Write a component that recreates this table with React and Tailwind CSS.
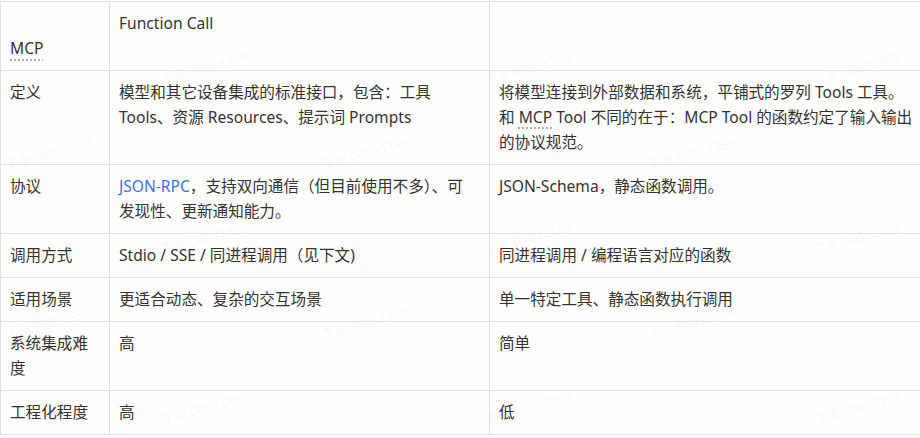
import React from 'react';

const rows = [
  {
    h: ['', 'MCP'],
    a: ['Function Call'],
    b: [''],
    header: true,
  },
  {
    h: ['定义'],
    a: ['模型和其它设备集成的标准接口，包含：工具', 'Tools、资源 Resources、提示词 Prompts'],
    b: [
      '将模型连接到外部数据和系统，平铺式的罗列 Tools 工具。',
      <>和 <span className="underline decoration-dotted decoration-[#9a9a9a] underline-offset-[5px]">MCP</span> Tool 不同的在于：MCP Tool 的函数约定了输入输出</>,
      '的协议规范。',
    ],
  },
  {
    h: ['协议'],
    a: [<><span className="text-[#3b72e6]">JSON-RPC</span>，支持双向通信（但目前使用不多）、可</>, '发现性、更新通知能力。'],
    b: ['JSON-Schema，静态函数调用。'],
  },
  {
    h: ['调用方式'],
    a: ['Stdio / SSE / 同进程调用（见下文)'],
    b: ['同进程调用 / 编程语言对应的函数'],
  },
  {
    h: ['适用场景'],
    a: ['更适合动态、复杂的交互场景'],
    b: ['单一特定工具、静态函数执行调用'],
  },
  {
    h: ['系统集成难', '度'],
    a: ['高'],
    b: ['简单'],
  },
  {
    h: ['工程化程度'],
    a: ['高'],
    b: ['低'],
  },
];

// faint watermark grid
const marks = [];
[60, 145, 230, 315, 400].forEach((y, r) => {
  const xs = r % 2 === 1 ? [4, 320, 647] : [160, 483, 813];
  xs.forEach((x) => marks.push({ x, y: y + 2 }));
});

const Lines = ({ lines, mcp }) => (
  <>
    {lines.map((l, i) => (
      <div key={i} className="h-[25px] whitespace-nowrap">
        {mcp && l === 'MCP' ? (
          <span className="underline decoration-dotted decoration-[#9a9a9a] underline-offset-[6px]">MCP</span>
        ) : (
          l
        )}
      </div>
    ))}
  </>
);

export default function App() {
  return (
    <div
      className="relative w-[920px] h-[438px] overflow-hidden bg-[#fefefc] text-[#333] text-[15.6px] leading-[25px]"
      style={{ fontFamily: '"Noto Sans", "Noto Sans CJK SC", sans-serif' }}
    >
      <div className="mt-px border-l border-t border-[#e1e1e1]">
        {rows.map((row, i) => (
          <div key={i} className="grid grid-cols-[109px_380px_1fr] border-b border-[#e1e1e1]">
            <div className="border-r border-[#e1e1e1] px-[9px] py-[9px]">
              <Lines lines={row.h} mcp={row.header} />
            </div>
            <div className="border-r border-[#e1e1e1] px-[9px] py-[9px]">
              <Lines lines={row.a} />
            </div>
            <div className="px-[9px] py-[9px]">
              <Lines lines={row.b} />
            </div>
          </div>
        ))}
      </div>

      <div className="pointer-events-none absolute inset-0" aria-hidden="true">
        {marks.map((m, i) => (
          <span
            key={i}
            className="absolute whitespace-nowrap text-[13px] leading-none text-[#000]/[0.045] -rotate-[15deg]"
            style={{ left: m.x, top: m.y }}
          >
            丁幸 00033359
          </span>
        ))}
      </div>
    </div>
  );
}
